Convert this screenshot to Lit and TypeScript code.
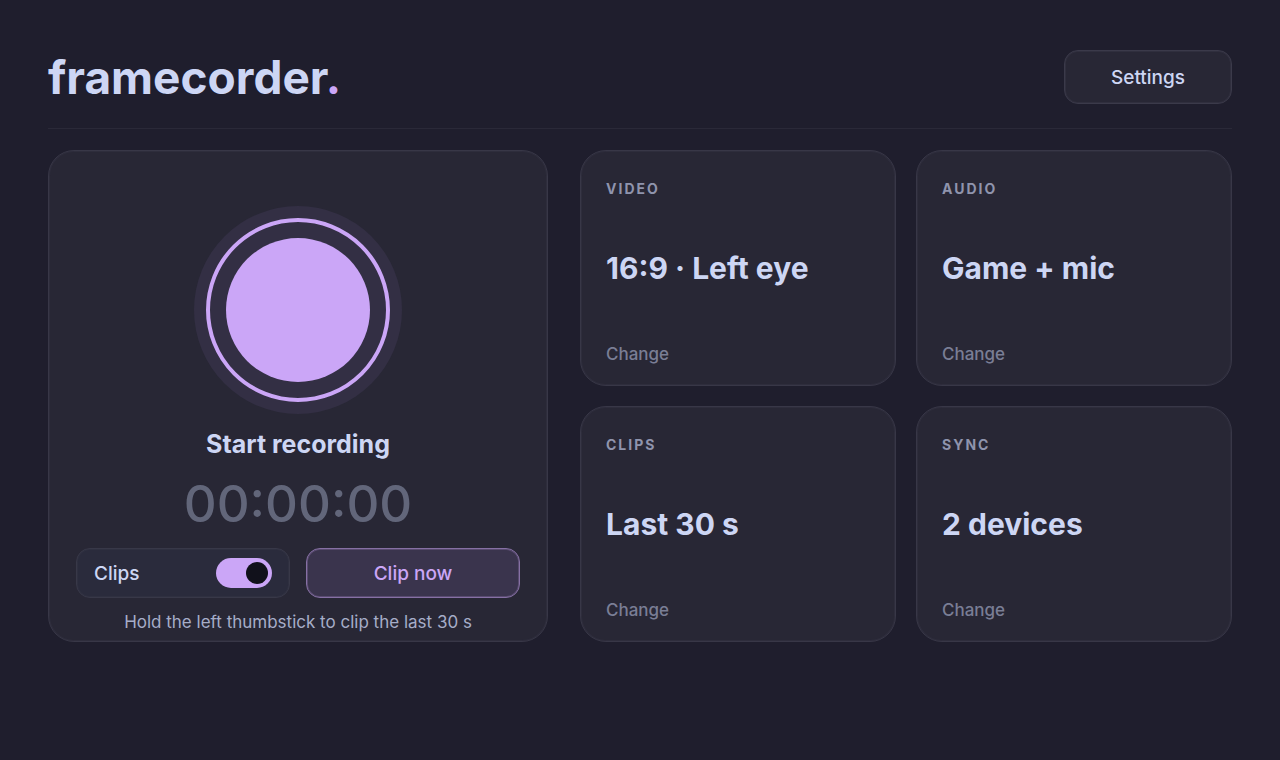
import { LitElement, html, css } from "lit";
import { customElement, property, state } from "lit/decorators.js";

@customElement("setting-tile")
class SettingTile extends LitElement {
  @property() label = "";
  @property() value = "";

  static styles = css`
    :host {
      display: flex;
      flex-direction: column;
      justify-content: space-between;
      align-items: flex-start;
      box-sizing: border-box;
      min-height: 236px;
      padding: 30px 25px 16px;
      border: 1px solid #383747;
      border-radius: 26px;
      background: #282735;
      box-shadow: inset 0 0 0 1px #2e2d3c;
    }
    .label {
      margin: 0;
      font-size: 14px;
      font-weight: 700;
      line-height: 16px;
      letter-spacing: 2px;
      text-transform: uppercase;
      color: #8f94ad;
    }
    .value {
      margin: 0;
      font-size: 30px;
      font-weight: 700;
      line-height: 40px;
      color: #cdd6f4;
    }
    .change {
      padding: 0;
      border: 0;
      background: none;
      font: inherit;
      font-size: 17px;
      font-weight: 500;
      line-height: 30px;
      color: #7a7e95;
      cursor: pointer;
    }
  `;

  render() {
    return html`
      <h2 class="label">${this.label}</h2>
      <p class="value">${this.value}</p>
      <button class="change" aria-label="Change ${this.label}">Change</button>
    `;
  }
}

@customElement("app-root")
class AppRoot extends LitElement {
  @state() private clipsOn = true;

  private tiles = [
    { label: "Video", value: "16:9 · Left eye" },
    { label: "Audio", value: "Game + mic" },
    { label: "Clips", value: "Last 30 s" },
    { label: "Sync", value: "2 devices" },
  ];

  static styles = css`
    :host {
      display: block;
      box-sizing: border-box;
      min-height: 100vh;
      padding: 50px 48px;
      background: #1f1e2d;
      color: #cdd6f4;
      font-family: Inter, "Open Sans", sans-serif;
    }
    button {
      font-family: inherit;
      cursor: pointer;
    }
    .header {
      display: flex;
      justify-content: space-between;
      align-items: center;
      padding-bottom: 24px;
      border-bottom: 1px solid #2a2938;
      margin-bottom: 21px;
    }
    .brand {
      margin: 0;
      font-size: 46px;
      font-weight: 700;
      line-height: 54px;
    }
    .dot {
      color: #cba6f7;
    }
    .settings {
      box-sizing: border-box;
      width: 168px;
      height: 54px;
      border: 1px solid #3b3a4a;
      border-radius: 14px;
      background: #282735;
      box-shadow: inset 0 0 0 1px #302f3e;
      color: #cdd6f4;
      font-size: 19px;
      font-weight: 500;
    }
    .main {
      display: grid;
      grid-template-columns: minmax(0, 500fr) minmax(0, 652fr);
      gap: 32px;
    }
    .recorder {
      display: flex;
      flex-direction: column;
      align-items: center;
      justify-content: flex-end;
      box-sizing: border-box;
      padding: 55px 27px 7px;
      border: 1px solid #383747;
      border-radius: 26px;
      background: #282735;
      box-shadow: inset 0 0 0 1px #2e2d3c;
    }
    .record {
      display: grid;
      place-items: center;
      width: 208px;
      height: 208px;
      padding: 0;
      border: 0;
      border-radius: 50%;
      background: #332f44;
    }
    .ring {
      display: grid;
      place-items: center;
      box-sizing: border-box;
      width: 184px;
      height: 184px;
      border: 4px solid #cba6f7;
      border-radius: 50%;
    }
    .core {
      width: 144px;
      height: 144px;
      border-radius: 50%;
      background: #cba6f7;
    }
    .state {
      margin: 14px 0 0;
      font-size: 25px;
      font-weight: 700;
      line-height: 32px;
    }
    .timer {
      margin: 12px 0;
      font-size: 51px;
      font-weight: 500;
      line-height: 64px;
      color: #62667a;
    }
    .actions {
      display: grid;
      grid-template-columns: 1fr 1fr;
      gap: 16px;
      width: 100%;
    }
    .clips,
    .clip-now {
      box-sizing: border-box;
      height: 50px;
      border: 1px solid #383848;
      border-radius: 14px;
      font-size: 19px;
      font-weight: 500;
    }
    .clips {
      display: flex;
      align-items: center;
      justify-content: space-between;
      padding: 0 17px;
      background: #2a2b3c;
      box-shadow: inset 0 0 0 1px #2f3040;
      cursor: pointer;
    }
    .clip-now {
      border-color: #8670a4;
      background: #3a344d;
      box-shadow: inset 0 0 0 1px #594b70;
      color: #cba6f7;
    }
    .switch {
      display: flex;
      align-items: center;
      appearance: none;
      box-sizing: border-box;
      width: 56px;
      height: 30px;
      margin: 0;
      padding: 4px;
      border-radius: 15px;
      background: #585b70;
      cursor: pointer;
    }
    .switch::before {
      content: "";
      width: 22px;
      height: 22px;
      border-radius: 50%;
      background: #11111b;
    }
    .switch:checked {
      justify-content: flex-end;
      background: #cba6f7;
    }
    .hint {
      margin: 12px 0 0;
      font-size: 17px;
      line-height: 24px;
      color: #a6adc8;
    }
    .tiles {
      display: grid;
      grid-template-columns: 1fr 1fr;
      gap: 20px;
    }
  `;

  render() {
    return html`
      <header class="header">
        <h1 class="brand">framecorder<span class="dot">.</span></h1>
        <button class="settings">Settings</button>
      </header>
      <main class="main">
        <section class="recorder">
          <button class="record" aria-labelledby="state">
            <span class="ring"><span class="core"></span></span>
          </button>
          <p class="state" id="state">Start recording</p>
          <p class="timer">00:00:00</p>
          <div class="actions">
            <label class="clips" for="clips">
              Clips
              <input
                class="switch"
                id="clips"
                type="checkbox"
                .checked=${this.clipsOn}
                @change=${(e: Event) => (this.clipsOn = (e.target as HTMLInputElement).checked)}
              />
            </label>
            <button class="clip-now">Clip now</button>
          </div>
          <p class="hint">Hold the left thumbstick to clip the last 30 s</p>
        </section>
        <section class="tiles">
          ${this.tiles.map(
            (t) => html`<setting-tile .label=${t.label} .value=${t.value}></setting-tile>`
          )}
        </section>
      </main>
    `;
  }
}
